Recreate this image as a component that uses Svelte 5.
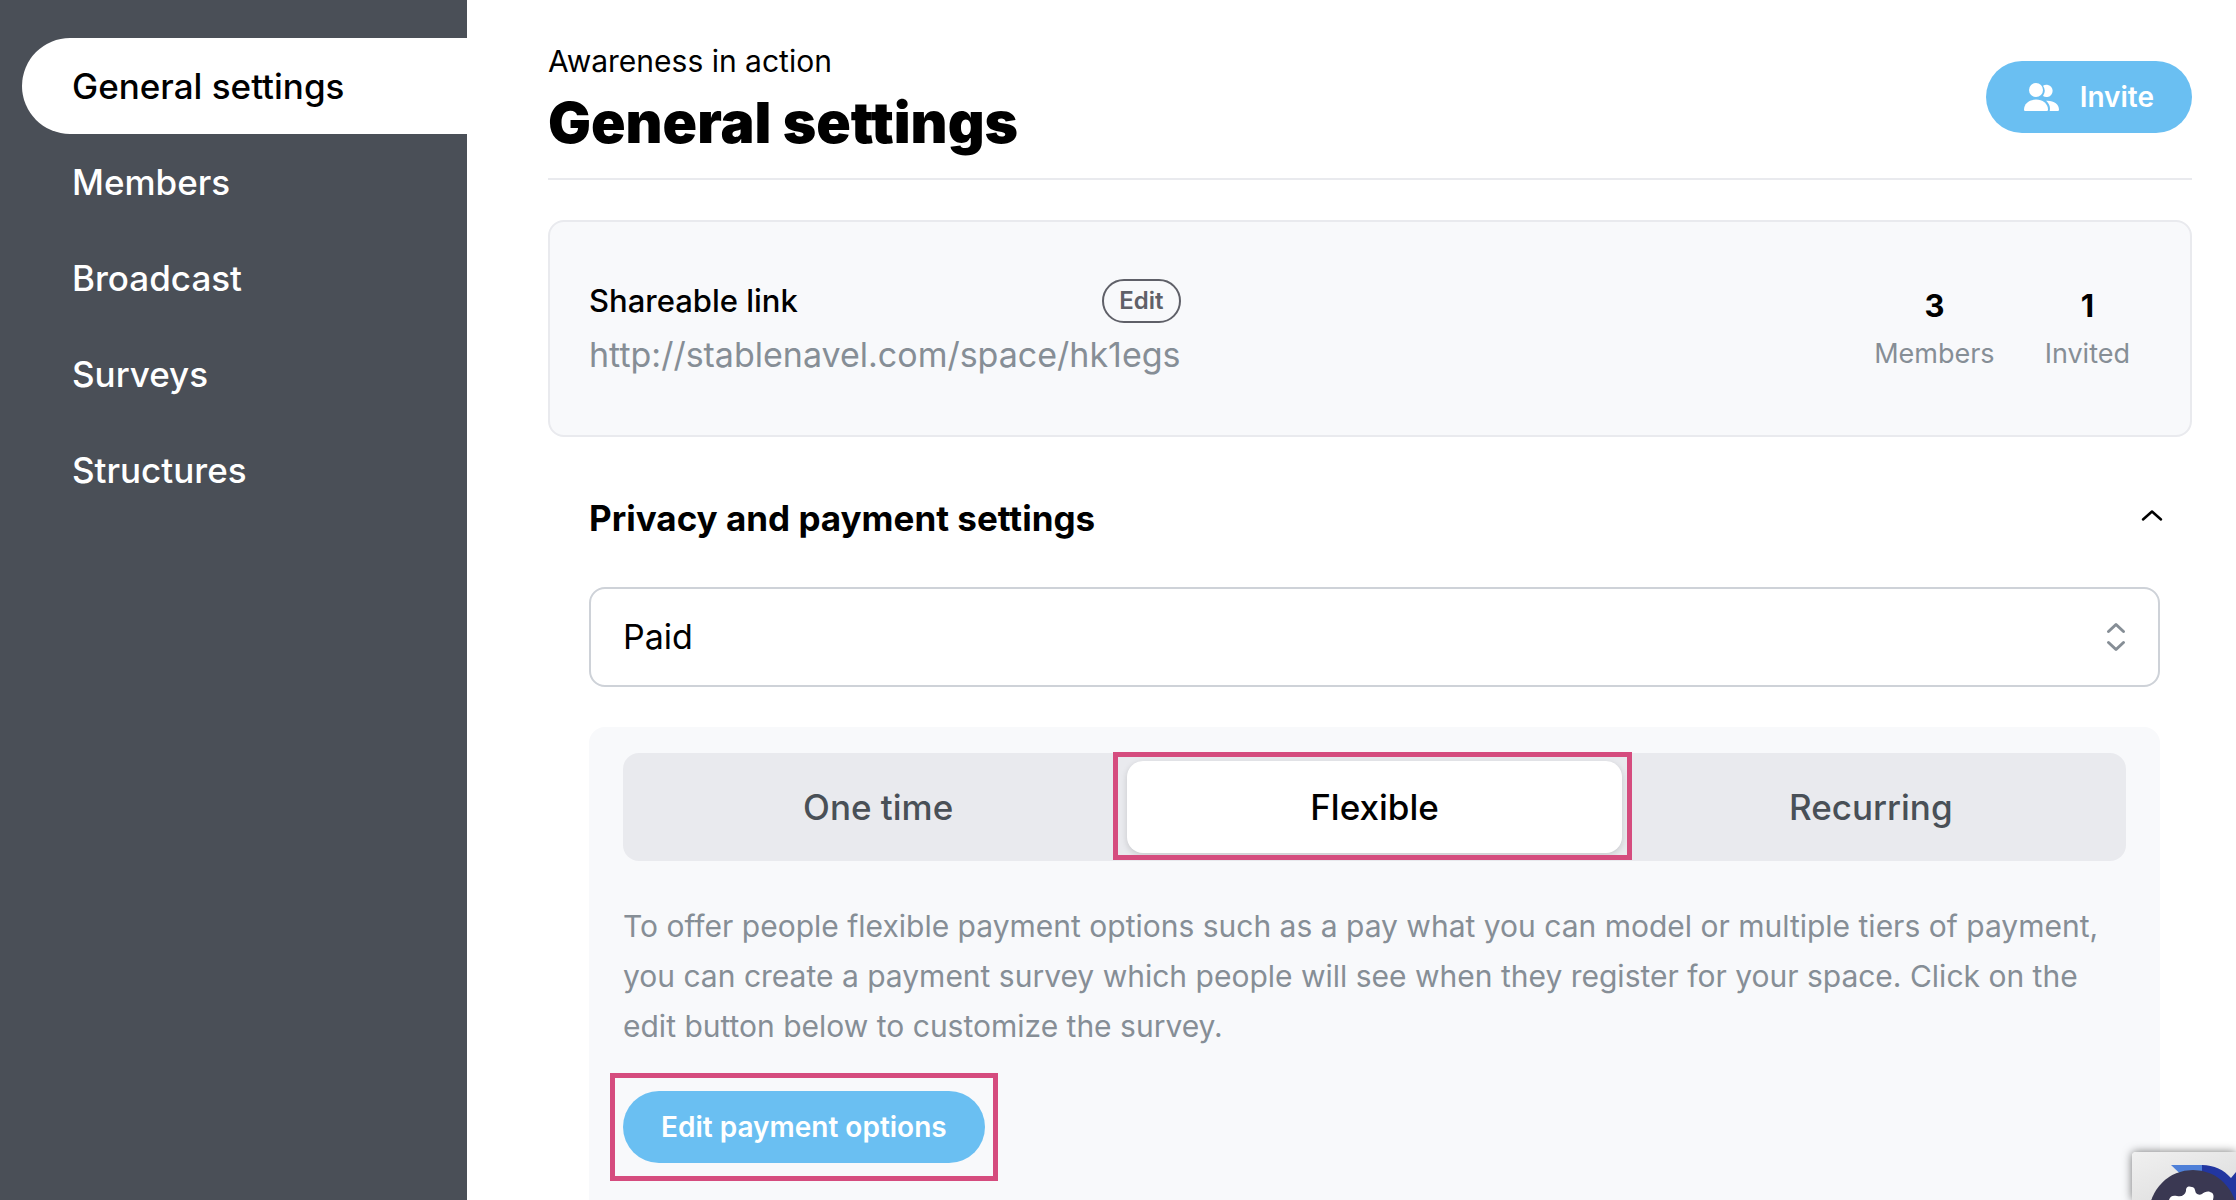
<script lang="ts">
  const links = ["General settings", "Members", "Broadcast", "Surveys", "Structures"];
  const plans = ["One time", "Flexible", "Recurring"];

  let current = $state("General settings");
  let plan = $state("Flexible");
  let privacy = $state("paid");
  let open = $state(true);
</script>

<div class="page">
  <nav>
    {#each links as link (link)}
      <a
        href="#{link.toLowerCase().replace(' ', '-')}"
        class:active={current === link}
        onclick={() => (current = link)}>{link}</a
      >
    {/each}
  </nav>

  <main>
    <header>
      <div>
        <p class="space-name">Awareness in action</p>
        <h1>General settings</h1>
      </div>
      <button class="primary">
        <svg width="36" height="28" viewBox="0 0 36 28" fill="currentColor" aria-hidden="true">
          <circle cx="12" cy="7" r="7" />
          <path
            d="M0 26.5C0 20.5 5.5 16.5 12 16.5s12 4 12 10c0 1-.6 1.5-1.5 1.5h-21C.6 28 0 27.5 0 26.5z"
          />
          <path d="M19 13a9 9 0 0 0 0-10.300a6.200 6.200 0 1 1 0 10.300z" />
          <path
            d="M22 17.700c7.500-.600 13 3.300 13 8.800 0 1-.6 1.500-1.500 1.500h-7.800c1-3.800-.5-7.500-3.700-10.300z"
          />
        </svg>
        Invite
      </button>
    </header>

    <section class="card">
      <div class="share">
        <div class="share-top">
          <h2>Shareable link</h2>
          <button class="edit">Edit</button>
        </div>
        <p>http://stablenavel.com/space/hk1egs</p>
      </div>
      <dl>
        <div>
          <dd>3</dd>
          <dt>Members</dt>
        </div>
        <div>
          <dd>1</dd>
          <dt>Invited</dt>
        </div>
      </dl>
    </section>

    <section class="settings">
      <button class="toggle" aria-expanded={open} onclick={() => (open = !open)}>
        Privacy and payment settings
        <svg class:closed={!open} width="22" height="18" viewBox="0 0 22 18" aria-hidden="true">
          <path d="M2 10.500 11 2.500 20 10.500" />
        </svg>
      </button>

      {#if open}
        <div class="select">
          <select aria-label="Privacy" bind:value={privacy}>
            <option value="free">Free</option>
            <option value="paid">Paid</option>
          </select>
          <svg width="20" height="30" viewBox="0 0 20 30" aria-hidden="true">
            <path d="M2.500 9.500 10 2.500 17.500 9.500M2.500 20.500 10 27.500 17.500 20.500" />
          </svg>
        </div>

        <div class="panel">
          <div class="tabs" role="tablist">
            {#each plans as p (p)}
              <button
                role="tab"
                aria-selected={plan === p}
                class:selected={plan === p}
                onclick={() => (plan = p)}>{p}</button
              >
            {/each}
          </div>
          <p>
            To offer people flexible payment options such as a pay what you can model or multiple
            tiers of payment, you can create a payment survey which people will see when they
            register for your space. Click on the edit button below to customize the survey.
          </p>
          <button class="primary marked">Edit payment options</button>
        </div>
      {/if}
    </section>
  </main>

  <div class="badge">
    <svg width="104" height="48" viewBox="0 0 104 48" aria-hidden="true">
      <path d="M39 13h32v20H60z" fill="#4f80d8" />
      <path d="M70 13c12 0 22 5 29 13l5-6v28H70z" fill="#2236a0" />
      <circle cx="61" cy="62" r="44" fill="#3a3852" />
      <path
        d="M37 48c1-4 4-5 8-4 5 1 8-1 9-5 0-5 3-5 6-4 3 0 3 4 4 6 2 2 4 2 6 1 2-2 6-3 8-2 4 1 4 4 3 8z"
        fill="#fff"
      />
    </svg>
  </div>
</div>

<style>
  :global(body) {
    margin: 0;
    background: #fff;
  }

  .page {
    display: flex;
    min-height: 100vh;
    color: #000;
    font-family: Inter, "Liberation Sans", sans-serif;
    font-size: 30px;
    line-height: 50px;
  }

  h1,
  h2,
  p,
  dl,
  dd {
    margin: 0;
  }

  button,
  select {
    border: none;
    background: none;
    padding: 0;
    color: inherit;
    font: inherit;
    cursor: pointer;
  }

  nav {
    flex: none;
    box-sizing: border-box;
    width: 467px;
    padding: 38px 0 0 22px;
    background: #4a4f57;
  }

  nav a {
    display: block;
    padding-left: 50px;
    color: #fff;
    font-size: 35px;
    font-weight: 500;
    line-height: 96px;
    text-decoration: none;
  }

  nav a.active {
    border-radius: 48px 0 0 48px;
    background: #fff;
    color: #000;
  }

  main {
    flex: 1;
    min-width: 0;
    display: flex;
    flex-direction: column;
    padding: 36px 44px 0 81px;
  }

  header {
    display: flex;
    justify-content: space-between;
    align-items: center;
    border-bottom: 2px solid #e9eaee;
    padding-bottom: 20px;
  }

  h1 {
    padding: 5px 0 3px;
    font-size: 57px;
    font-weight: 900;
    line-height: 64px;
  }

  .primary {
    display: flex;
    align-items: center;
    gap: 20px;
    height: 72px;
    padding: 0 38px;
    border-radius: 36px;
    background: #6abff2;
    color: #fff;
    font-size: 28px;
    font-weight: 600;
  }

  .card {
    display: flex;
    justify-content: space-between;
    align-items: center;
    margin-top: 40px;
    padding: 54px 60px 51px 39px;
    border: 2px solid #e9eaee;
    border-radius: 16px;
    background: #f8f9fb;
  }

  .share-top {
    display: flex;
    justify-content: space-between;
    align-items: center;
  }

  h2 {
    font-size: 31px;
    font-weight: 500;
  }

  .edit {
    box-sizing: border-box;
    height: 44px;
    padding: 0 15px;
    border: 2px solid #5f6068;
    border-radius: 22px;
    color: #5f6068;
    font-size: 24px;
    font-weight: 600;
    line-height: 40px;
  }

  .share p {
    color: #868e96;
    font-size: 34px;
    line-height: 58px;
  }

  dl {
    display: flex;
    gap: 50px;
    text-align: center;
  }

  dl div {
    display: flex;
    flex-direction: column;
  }

  dd {
    font-size: 31px;
    font-weight: 700;
    line-height: 48px;
  }

  dt {
    color: #868e96;
    font-size: 27px;
    line-height: 48px;
  }

  .settings {
    flex: 1;
    display: flex;
    flex-direction: column;
    padding: 56px 32px 0 41px;
  }

  .toggle {
    display: flex;
    justify-content: space-between;
    align-items: center;
    font-size: 35px;
    font-weight: 700;
  }

  .toggle svg {
    margin-right: -3px;
    fill: none;
    stroke: #000;
    stroke-width: 2.5;
    stroke-linecap: round;
    stroke-linejoin: round;
  }

  .toggle svg.closed {
    transform: rotate(180deg);
  }

  .select {
    position: relative;
    margin-top: 44px;
  }

  select {
    box-sizing: border-box;
    width: 100%;
    height: 100px;
    padding: 0 32px;
    border: 2px solid #ced2d8;
    border-radius: 16px;
    appearance: none;
    background: #fff;
    font-size: 34px;
  }

  .select svg {
    position: absolute;
    top: 35px;
    right: 34px;
    fill: none;
    stroke: #868e96;
    stroke-width: 3;
    stroke-linecap: round;
    stroke-linejoin: round;
    pointer-events: none;
  }

  .panel {
    flex: 1;
    margin-top: 40px;
    padding: 26px 34px 38px;
    border-radius: 16px 16px 0 0;
    background: #f8f9fb;
  }

  .tabs {
    display: grid;
    grid-template-columns: repeat(3, 1fr);
    gap: 2px;
    padding: 8px;
    border-radius: 16px;
    background: #e9eaee;
  }

  .tabs button {
    position: relative;
    border-radius: 16px;
    color: #495057;
    font-size: 35px;
    font-weight: 500;
    line-height: 92px;
  }

  .tabs .selected {
    background: #fff;
    box-shadow: 0 2px 6px rgba(0, 0, 0, 0.15);
    color: #000;
  }

  .tabs .selected::after,
  .marked::after {
    content: "";
    position: absolute;
    border: 5px solid #d54c7e;
    pointer-events: none;
  }

  .tabs .selected::after {
    inset: -9px -10px -7px -14px;
  }

  .panel p {
    margin: 40px 0;
    color: #868e96;
  }

  .marked {
    position: relative;
  }

  .marked::after {
    inset: -18px -13px;
  }

  .badge {
    position: fixed;
    right: 0;
    bottom: 0;
    height: 48px;
    border-radius: 4px 0 0 0;
    background: linear-gradient(160deg, #f0f0f0, #dcdcdc);
    box-shadow: 0 0 10px rgba(0, 0, 0, 0.55);
  }

  .badge svg {
    display: block;
  }
</style>
